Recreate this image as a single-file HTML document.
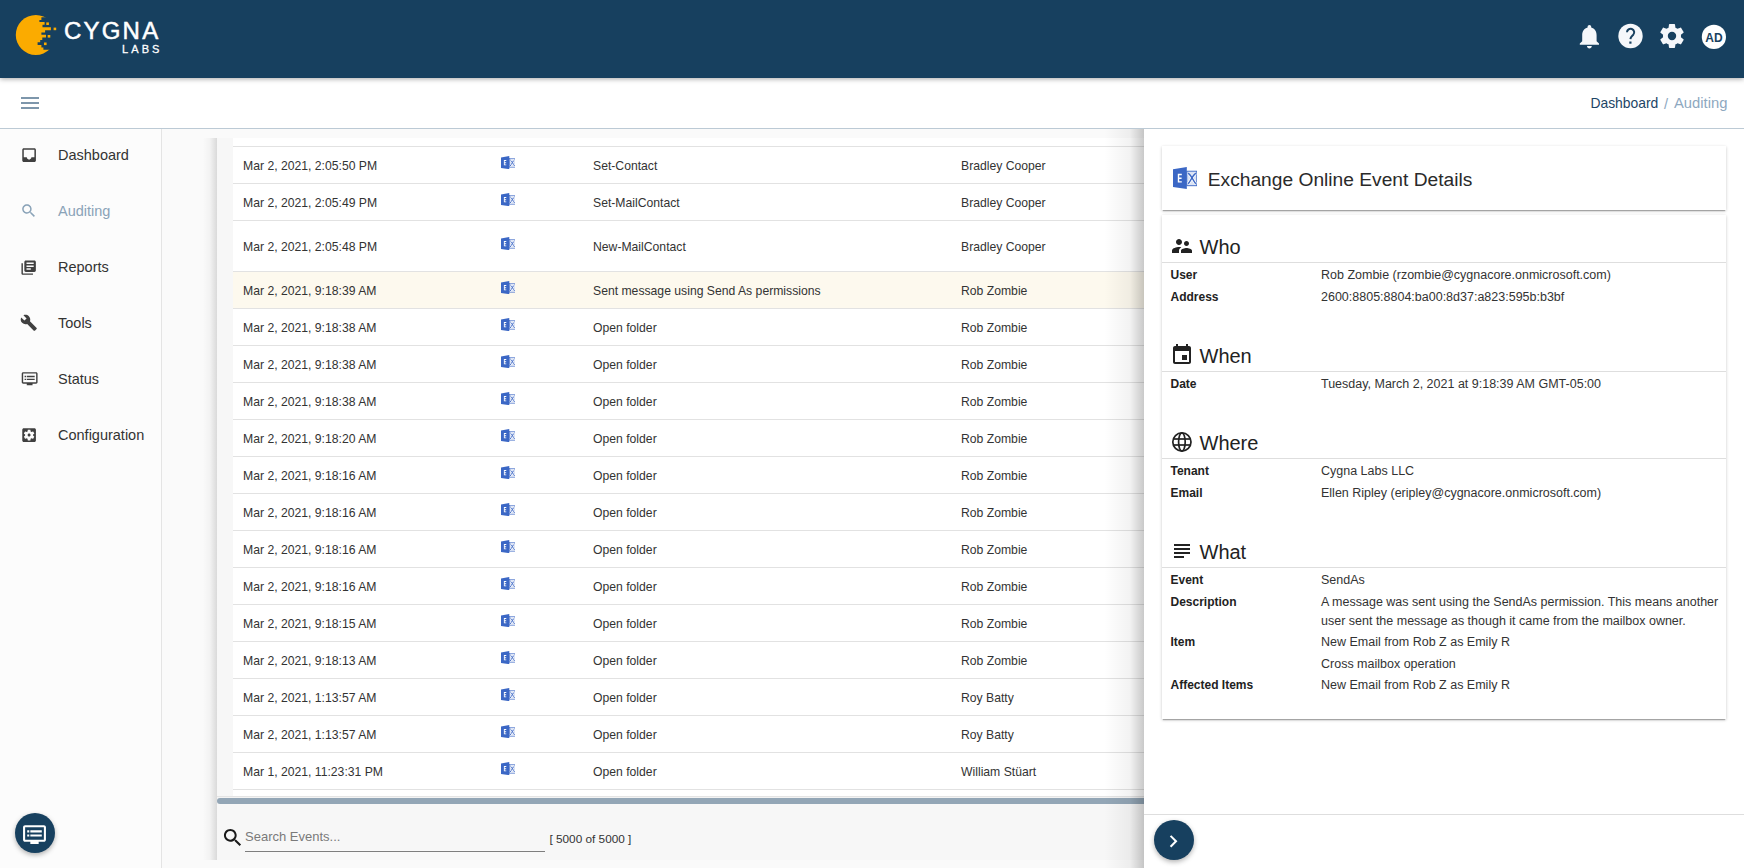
<!DOCTYPE html>
<html><head><meta charset="utf-8">
<style>
*{box-sizing:border-box;margin:0;padding:0}
html,body{width:1744px;height:868px;overflow:hidden;background:#fdfdfd;font-family:"Liberation Sans",sans-serif;color:#222;position:relative}
.abs{position:absolute}
.t{position:absolute;white-space:nowrap;line-height:1}
#hdr{position:absolute;left:0;top:0;width:1744px;height:78px;background:#17405f;box-shadow:0 1px 5px rgba(0,0,0,.35);z-index:5}
#bar{position:absolute;left:0;top:78px;width:1744px;height:51px;background:#fff;border-bottom:1px solid #bccad5}
#side{position:absolute;left:0;top:129px;width:162px;height:739px;background:#fcfcfc;border-right:1px solid #e4e4e4}
#main{position:absolute;left:162px;top:129px;width:982px;height:739px;background:#fafafa}
#cardsh{position:absolute;left:203px;top:138px;width:14px;height:722px;background:linear-gradient(to right,rgba(0,0,0,0),rgba(0,0,0,.03) 50%,rgba(0,0,0,.13))}
#card{position:absolute;left:217px;top:138px;width:927px;height:722px;background:#f7f7f7}
#tbl{position:absolute;left:233px;top:138px;width:911px;height:658px;background:#fff}
#scroll{position:absolute;left:217px;top:796px;width:927px;height:8px;background:#f3f3f3;border-top:1px solid #e4e4e4}
#thumb{position:absolute;left:217px;top:798px;width:1000px;height:6px;background:#93a6b6;border-radius:3px}
.row{position:absolute;left:233px;width:911px;border-bottom:1px solid #e2e2e2;font-size:12.2px;color:#333}
.row span{position:absolute;white-space:nowrap;line-height:14px}
.c1{left:10px}.c3{left:360px}.c4{left:728px}
#detsh{position:absolute;left:1104px;top:129px;width:40px;height:739px;background:linear-gradient(to right,rgba(0,0,0,0),rgba(0,0,0,.05) 65%,rgba(0,0,0,.21))}
#detail{position:absolute;left:1144px;top:129px;width:600px;height:739px;background:#fff}
.dcard{position:absolute;left:1162px;width:564px;background:#fff;box-shadow:0 1px 3px rgba(0,0,0,.22),0 2px 1px -1px rgba(0,0,0,.25)}
.nav{position:absolute;left:58px;font-size:14.5px;color:#333;white-space:nowrap;line-height:16px}
.sec{position:absolute;left:1199.5px;font-size:20px;color:#222;white-space:nowrap;line-height:20px}
.div{position:absolute;left:1162px;width:564px;height:1px;background:#dedede}
.lab{position:absolute;left:1170.5px;font-size:12px;font-weight:bold;color:#222;white-space:nowrap;line-height:14px}
.val{position:absolute;left:1321px;font-size:12.5px;color:#333;white-space:nowrap;line-height:14px}
.fab{position:absolute;width:40px;height:40px;border-radius:50%;background:#17405f;box-shadow:0 2px 5px rgba(0,0,0,.3)}
</style></head><body>


<div id="hdr">
<svg class="abs" style="left:0;top:0" width="200" height="78" viewBox="0 0 200 78">
<defs><clipPath id="lc"><polygon points="10,0 60,0 60,17.2 41.4,17.2 41.4,20 39.4,20 39.4,22.1 44.6,22.1 44.6,24.7 42.5,24.7 42.5,27.3 50.9,27.3 50.9,30.2 45.1,30.2 45.1,32.5 41.4,32.5 41.4,34.8 46,34.8 46,37.4 42.3,37.4 42.3,40 40.2,40 40.2,42.3 37.6,42.3 37.6,44.9 41.4,44.9 41.4,47.4 43.4,47.4 43.4,49.7 60,49.7 60,60 10,60"/></clipPath></defs>
<circle cx="35.8" cy="34.9" r="20" fill="#fbab00" clip-path="url(#lc)"/>
<rect x="46.3" y="22.4" width="2.6" height="2.6" fill="#fbab00"/>
<rect x="53.6" y="27.6" width="2.6" height="2.6" fill="#fbab00"/>
<rect x="47.7" y="35" width="2.6" height="2.6" fill="#fbab00"/>
<rect x="44" y="42.5" width="2.6" height="2.6" fill="#fbab00"/>
</svg>
<div class="t" style="left:64px;top:19.2px;font-size:24px;letter-spacing:2.2px;color:#fff;-webkit-text-stroke:0.5px #fff">CYGNA</div>
<div class="t" style="left:122px;top:44px;font-size:11px;letter-spacing:3.1px;color:#fff;-webkit-text-stroke:0.3px #fff">LABS</div>
<svg class="abs" style="left:1574.5px;top:21.6px" width="28.8" height="28.8" viewBox="0 0 24 24"><path fill="#f5f7fa" d="M12 22c1.1 0 2-.9 2-2h-4c0 1.1.89 2 2 2zm6-6v-5c0-3.07-1.64-5.64-4.5-6.32V4c0-.83-.67-1.5-1.5-1.5s-1.5.67-1.5 1.5v.68C7.63 5.36 6 7.92 6 11v5l-2 2v1h16v-1l-2-2z"/></svg>
<svg class="abs" style="left:1600px;top:0" width="144" height="78" viewBox="1600 0 144 78">
<circle cx="1630.5" cy="36" r="12.2" fill="#f5f7fa"/>
<path d="M1627 32.3a3.6 3.6 0 1 1 6.3 2.4c-1.3 1.4-2.7 2.3-2.9 4.4" fill="none" stroke="#194160" stroke-width="2"/>
<rect x="1629.3" y="41.5" width="2.2" height="2.2" fill="#194160"/>
<g transform="translate(1657.6 21.6) scale(1.2)"><path fill="#f5f7fa" d="M12,15.5A3.5,3.5 0 0,1 8.5,12A3.5,3.5 0 0,1 12,8.5A3.5,3.5 0 0,1 15.5,12A3.5,3.5 0 0,1 12,15.5M19.43,12.97C19.47,12.65 19.5,12.33 19.5,12C19.5,11.67 19.47,11.34 19.43,11L21.54,9.37C21.73,9.22 21.78,8.95 21.66,8.73L19.66,5.27C19.54,5.05 19.270,4.96 19.05,5.05L16.56,6.05C16.04,5.66 15.5,5.32 14.87,5.07L14.5,2.42C14.46,2.18 14.25,2 14,2H10C9.75,2 9.54,2.18 9.5,2.42L9.13,5.07C8.5,5.32 7.96,5.66 7.44,6.05L4.95,5.05C4.73,4.96 4.46,5.05 4.34,5.27L2.34,8.73C2.21,8.95 2.27,9.22 2.46,9.37L4.57,11C4.53,11.34 4.5,11.67 4.5,12C4.5,12.33 4.53,12.65 4.57,12.97L2.46,14.63C2.27,14.78 2.21,15.05 2.34,15.27L4.34,18.73C4.46,18.95 4.73,19.03 4.95,18.95L7.44,17.94C7.96,18.34 8.5,18.68 9.13,18.93L9.5,21.58C9.54,21.82 9.75,22 10,22H14C14.25,22 14.46,21.82 14.5,21.58L14.87,18.93C15.5,18.67 16.04,18.34 16.56,17.94L19.05,18.95C19.27,19.03 19.54,18.95 19.66,18.73L21.66,15.27C21.78,15.05 21.73,14.78 21.54,14.63L19.43,12.97Z"/></g>
<circle cx="1713.9" cy="36.9" r="12.1" fill="#fff"/>
</svg>
<div class="t" style="left:1705.3px;top:31.5px;font-size:12px;font-weight:bold;color:#194160">AD</div>
</div>

<div id="bar">
<div class="abs" style="left:21px;top:19px;width:18px;height:2px;background:#7d96ab"></div>
<div class="abs" style="left:21px;top:24px;width:18px;height:2px;background:#7d96ab"></div>
<div class="abs" style="left:21px;top:29px;width:18px;height:2px;background:#7d96ab"></div>
<div class="t" style="left:1590.4px;top:19.1px;font-size:13.9px;color:#1d4566">Dashboard</div><div class="t" style="left:1664px;top:18.5px;font-size:14.6px;color:#8ea8bf">/</div><div class="t" style="left:1674px;top:18.4px;font-size:14.8px;color:#8ea8bf">Auditing</div>
</div>

<div id="side">
<svg class="abs" style="left:20.0px;top:16.5px" width="18.2" height="18.2" viewBox="0 0 24 24"><path fill="#404040" d="M19 3H4.99c-1.11 0-1.98.89-1.98 2L3 19c0 1.1.88 2 1.99 2H19c1.1 0 2-.9 2-2V5c0-1.11-.9-2-2-2zm0 12h-4c0 1.66-1.35 3-3 3s-3-1.34-3-3H4.99V5H19v10z"/></svg>
<div class="nav" style="top:18.3px;color:#333">Dashboard</div>
<svg class="abs" style="left:20.1px;top:73.1px" width="17.5" height="17.5" viewBox="0 0 24 24"><path fill="#8aa3b8" d="M15.5 14h-.79l-.28-.27C15.41 12.590 16 11.11 16 9.5 16 5.91 13.09 3 9.5 3S3 5.91 3 9.5 5.91 16 9.5 16c1.61 0 3.09-.59 4.23-1.57l.27.28v.79l5 4.99L20.49 19l-4.99-5zm-6 0C7.01 14 5 11.99 5 9.5S7.01 5 9.5 5 14 7.01 14 9.5 11.99 14 9.5 14z"/></svg>
<div class="nav" style="top:74.3px;color:#8aa3b8">Auditing</div>
<svg class="abs" style="left:20.3px;top:129.5px" width="17.3" height="17.3" viewBox="0 0 24 24"><path fill="#404040" d="M4 6H2v14c0 1.1.9 2 2 2h14v-2H4V6zm16-4H8c-1.1 0-2 .9-2 2v12c0 1.1.9 2 2 2h12c1.1 0 2-.9 2-2V4c0-1.1-.9-2-2-2zm-1 9H9V9h10v2zm-4 4H9v-2h6v2zm4-8H9V5h10v2z"/></svg>
<div class="nav" style="top:130.3px;color:#333">Reports</div>
<svg class="abs" style="left:19.9px;top:184.9px" width="17.6" height="17.6" viewBox="0 0 24 24"><path fill="#404040" d="M22.7 19l-9.1-9.1c.9-2.3.4-5-1.5-6.9-2-2-5-2.4-7.4-1.3L9 6 6 9 1.6 4.7C.4 7.1.9 10.1 2.9 12.1c1.9 1.9 4.6 2.4 6.9 1.5l9.1 9.1c.4.4 1 .4 1.4 0l2.3-2.3c.5-.4.5-1.1.1-1.4z"/></svg>
<div class="nav" style="top:186.3px;color:#333">Tools</div>
<svg class="abs" style="left:20.5px;top:240.7px" width="17.3" height="17.3" viewBox="0 0 24 24"><path fill="#404040" d="M21 3H3c-1.1 0-2 .9-2 2v12c0 1.1.9 2 2 2h5v2h8v-2h5c1.1 0 1.99-.9 1.99-2L23 5c0-1.1-.9-2-2-2zm0 14H3V5h18v12zm-2-9H8v2h11V8zm0 4H8v2h11v-2zM7 8H5v2h2V8zm0 4H5v2h2v-2z"/></svg>
<div class="nav" style="top:242.3px;color:#333">Status</div>
<svg class="abs" style="left:20.0px;top:296.7px" width="18.2" height="18.2" viewBox="0 0 24 24"><path fill="#404040" d="M12 10c-1.1 0-2 .9-2 2s.9 2 2 2 2-.9 2-2-.9-2-2-2zm7-7H5c-1.11 0-2 .9-2 2v14c0 1.1.89 2 2 2h14c1.11 0 2-.9 2-2V5c0-1.1-.89-2-2-2zm-1.75 9c0 .23-.02.46-.05.68l1.48 1.16c.13.11.17.3.08.45l-1.4 2.42c-.09.15-.27.21-.43.15l-1.74-.7c-.36.28-.76.51-1.18.69l-.26 1.85c-.03.17-.18.3-.35.3h-2.8c-.17 0-.32-.13-.35-.29l-.26-1.85c-.43-.18-.82-.41-1.18-.69l-1.74.7c-.16.06-.34 0-.43-.15l-1.4-2.42c-.09-.15-.05-.34.08-.45l1.48-1.16c-.03-.23-.05-.46-.05-.69 0-.23.02-.46.05-.68l-1.48-1.160c-.13-.11-.17-.3-.08-.45l1.4-2.42c.09-.15.27-.21.43-.15l1.74.7c.36-.28.76-.51 1.18-.69l.26-1.85c.03-.17.18-.3.35-.3h2.8c.17 0 .32.13.35.29l.26 1.85c.43.18.82.41 1.18.69l1.74-.7c.16-.06.34 0 .43.15l1.4 2.42c.09.15.05.34-.08.45l-1.48 1.16c.03.23.05.46.05.69z"/></svg>
<div class="nav" style="top:298.3px;color:#333">Configuration</div>
</div>
<div class="fab" style="left:15px;top:813px"><svg class="abs" style="left:7.1px;top:8.9px" width="25" height="25" viewBox="0 0 24 24"><path fill="#fff" d="M21 3H3c-1.1 0-2 .9-2 2v12c0 1.1.9 2 2 2h5v2h8v-2h5c1.1 0 1.99-.9 1.99-2L23 5c0-1.1-.9-2-2-2zm0 14H3V5h18v12zm-2-9H8v2h11V8zm0 4H8v2h11v-2zM7 8H5v2h2V8zm0 4H5v2h2v-2z"/></svg></div>

<div id="main"></div>
<div id="cardsh"></div>
<div id="card"></div>
<div id="tbl"></div>
<div class="abs" style="left:233px;top:146px;width:911px;height:1px;background:#e2e2e2"></div>
<div class="row" style="top:147px;height:37px;"><span class="c1" style="top:11.5px">Mar 2, 2021, 2:05:50 PM</span><span class="c3" style="top:11.5px">Set-Contact</span><span class="c4" style="top:11.5px">Bradley Cooper</span><svg class="abs" style="left:268px;top:8.7px" width="14.40" height="13.20" viewBox="0 0 24 22"><rect x="13.8" y="4.2" width="10" height="14.5" fill="#dbe3f4" stroke="#3b67c5" stroke-width="0.9"/>
<path d="M15.2 6.2 C18.5 8.5 20 13.5 22.8 16.8 M22.8 6.2 C19.5 8.5 18 13.5 15.2 16.8" stroke="#fff" stroke-width="2.6" fill="none"/><path d="M15.2 6.2 C18.5 8.5 20 13.5 22.8 16.8 M22.8 6.2 C19.5 8.5 18 13.5 15.2 16.8" stroke="#3b67c5" stroke-width="1.5" fill="none"/>
<polygon points="0,2.3 13.8,0 13.8,22 0,19.9" fill="#3b67c5"/>
<path d="M4.8 6.8h4v1.4h-2.6v2.3h2.4v1.4h-2.4v2.3h2.6v1.4h-4z" fill="#fff"/></svg></div>
<div class="row" style="top:184px;height:37px;"><span class="c1" style="top:11.5px">Mar 2, 2021, 2:05:49 PM</span><span class="c3" style="top:11.5px">Set-MailContact</span><span class="c4" style="top:11.5px">Bradley Cooper</span><svg class="abs" style="left:268px;top:8.7px" width="14.40" height="13.20" viewBox="0 0 24 22"><rect x="13.8" y="4.2" width="10" height="14.5" fill="#dbe3f4" stroke="#3b67c5" stroke-width="0.9"/>
<path d="M15.2 6.2 C18.5 8.5 20 13.5 22.8 16.8 M22.8 6.2 C19.5 8.5 18 13.5 15.2 16.8" stroke="#fff" stroke-width="2.6" fill="none"/><path d="M15.2 6.2 C18.5 8.5 20 13.5 22.8 16.8 M22.8 6.2 C19.5 8.5 18 13.5 15.2 16.8" stroke="#3b67c5" stroke-width="1.5" fill="none"/>
<polygon points="0,2.3 13.8,0 13.8,22 0,19.9" fill="#3b67c5"/>
<path d="M4.8 6.8h4v1.4h-2.6v2.3h2.4v1.4h-2.4v2.3h2.6v1.4h-4z" fill="#fff"/></svg></div>
<div class="row" style="top:221px;height:51px;"><span class="c1" style="top:18.5px">Mar 2, 2021, 2:05:48 PM</span><span class="c3" style="top:18.5px">New-MailContact</span><span class="c4" style="top:18.5px">Bradley Cooper</span><svg class="abs" style="left:268px;top:15.7px" width="14.40" height="13.20" viewBox="0 0 24 22"><rect x="13.8" y="4.2" width="10" height="14.5" fill="#dbe3f4" stroke="#3b67c5" stroke-width="0.9"/>
<path d="M15.2 6.2 C18.5 8.5 20 13.5 22.8 16.8 M22.8 6.2 C19.5 8.5 18 13.5 15.2 16.8" stroke="#fff" stroke-width="2.6" fill="none"/><path d="M15.2 6.2 C18.5 8.5 20 13.5 22.8 16.8 M22.8 6.2 C19.5 8.5 18 13.5 15.2 16.8" stroke="#3b67c5" stroke-width="1.5" fill="none"/>
<polygon points="0,2.3 13.8,0 13.8,22 0,19.9" fill="#3b67c5"/>
<path d="M4.8 6.8h4v1.4h-2.6v2.3h2.4v1.4h-2.4v2.3h2.6v1.4h-4z" fill="#fff"/></svg></div>
<div class="row" style="top:272px;height:37px;background:#fdf9ee;"><span class="c1" style="top:11.5px">Mar 2, 2021, 9:18:39 AM</span><span class="c3" style="top:11.5px">Sent message using Send As permissions</span><span class="c4" style="top:11.5px">Rob Zombie</span><svg class="abs" style="left:268px;top:8.7px" width="14.40" height="13.20" viewBox="0 0 24 22"><rect x="13.8" y="4.2" width="10" height="14.5" fill="#dbe3f4" stroke="#3b67c5" stroke-width="0.9"/>
<path d="M15.2 6.2 C18.5 8.5 20 13.5 22.8 16.8 M22.8 6.2 C19.5 8.5 18 13.5 15.2 16.8" stroke="#fff" stroke-width="2.6" fill="none"/><path d="M15.2 6.2 C18.5 8.5 20 13.5 22.8 16.8 M22.8 6.2 C19.5 8.5 18 13.5 15.2 16.8" stroke="#3b67c5" stroke-width="1.5" fill="none"/>
<polygon points="0,2.3 13.8,0 13.8,22 0,19.9" fill="#3b67c5"/>
<path d="M4.8 6.8h4v1.4h-2.6v2.3h2.4v1.4h-2.4v2.3h2.6v1.4h-4z" fill="#fff"/></svg></div>
<div class="row" style="top:309px;height:37px;"><span class="c1" style="top:11.5px">Mar 2, 2021, 9:18:38 AM</span><span class="c3" style="top:11.5px">Open folder</span><span class="c4" style="top:11.5px">Rob Zombie</span><svg class="abs" style="left:268px;top:8.7px" width="14.40" height="13.20" viewBox="0 0 24 22"><rect x="13.8" y="4.2" width="10" height="14.5" fill="#dbe3f4" stroke="#3b67c5" stroke-width="0.9"/>
<path d="M15.2 6.2 C18.5 8.5 20 13.5 22.8 16.8 M22.8 6.2 C19.5 8.5 18 13.5 15.2 16.8" stroke="#fff" stroke-width="2.6" fill="none"/><path d="M15.2 6.2 C18.5 8.5 20 13.5 22.8 16.8 M22.8 6.2 C19.5 8.5 18 13.5 15.2 16.8" stroke="#3b67c5" stroke-width="1.5" fill="none"/>
<polygon points="0,2.3 13.8,0 13.8,22 0,19.9" fill="#3b67c5"/>
<path d="M4.8 6.8h4v1.4h-2.6v2.3h2.4v1.4h-2.4v2.3h2.6v1.4h-4z" fill="#fff"/></svg></div>
<div class="row" style="top:346px;height:37px;"><span class="c1" style="top:11.5px">Mar 2, 2021, 9:18:38 AM</span><span class="c3" style="top:11.5px">Open folder</span><span class="c4" style="top:11.5px">Rob Zombie</span><svg class="abs" style="left:268px;top:8.7px" width="14.40" height="13.20" viewBox="0 0 24 22"><rect x="13.8" y="4.2" width="10" height="14.5" fill="#dbe3f4" stroke="#3b67c5" stroke-width="0.9"/>
<path d="M15.2 6.2 C18.5 8.5 20 13.5 22.8 16.8 M22.8 6.2 C19.5 8.5 18 13.5 15.2 16.8" stroke="#fff" stroke-width="2.6" fill="none"/><path d="M15.2 6.2 C18.5 8.5 20 13.5 22.8 16.8 M22.8 6.2 C19.5 8.5 18 13.5 15.2 16.8" stroke="#3b67c5" stroke-width="1.5" fill="none"/>
<polygon points="0,2.3 13.8,0 13.8,22 0,19.9" fill="#3b67c5"/>
<path d="M4.8 6.8h4v1.4h-2.6v2.3h2.4v1.4h-2.4v2.3h2.6v1.4h-4z" fill="#fff"/></svg></div>
<div class="row" style="top:383px;height:37px;"><span class="c1" style="top:11.5px">Mar 2, 2021, 9:18:38 AM</span><span class="c3" style="top:11.5px">Open folder</span><span class="c4" style="top:11.5px">Rob Zombie</span><svg class="abs" style="left:268px;top:8.7px" width="14.40" height="13.20" viewBox="0 0 24 22"><rect x="13.8" y="4.2" width="10" height="14.5" fill="#dbe3f4" stroke="#3b67c5" stroke-width="0.9"/>
<path d="M15.2 6.2 C18.5 8.5 20 13.5 22.8 16.8 M22.8 6.2 C19.5 8.5 18 13.5 15.2 16.8" stroke="#fff" stroke-width="2.6" fill="none"/><path d="M15.2 6.2 C18.5 8.5 20 13.5 22.8 16.8 M22.8 6.2 C19.5 8.5 18 13.5 15.2 16.8" stroke="#3b67c5" stroke-width="1.5" fill="none"/>
<polygon points="0,2.3 13.8,0 13.8,22 0,19.9" fill="#3b67c5"/>
<path d="M4.8 6.8h4v1.4h-2.6v2.3h2.4v1.4h-2.4v2.3h2.6v1.4h-4z" fill="#fff"/></svg></div>
<div class="row" style="top:420px;height:37px;"><span class="c1" style="top:11.5px">Mar 2, 2021, 9:18:20 AM</span><span class="c3" style="top:11.5px">Open folder</span><span class="c4" style="top:11.5px">Rob Zombie</span><svg class="abs" style="left:268px;top:8.7px" width="14.40" height="13.20" viewBox="0 0 24 22"><rect x="13.8" y="4.2" width="10" height="14.5" fill="#dbe3f4" stroke="#3b67c5" stroke-width="0.9"/>
<path d="M15.2 6.2 C18.5 8.5 20 13.5 22.8 16.8 M22.8 6.2 C19.5 8.5 18 13.5 15.2 16.8" stroke="#fff" stroke-width="2.6" fill="none"/><path d="M15.2 6.2 C18.5 8.5 20 13.5 22.8 16.8 M22.8 6.2 C19.5 8.5 18 13.5 15.2 16.8" stroke="#3b67c5" stroke-width="1.5" fill="none"/>
<polygon points="0,2.3 13.8,0 13.8,22 0,19.9" fill="#3b67c5"/>
<path d="M4.8 6.8h4v1.4h-2.6v2.3h2.4v1.4h-2.4v2.3h2.6v1.4h-4z" fill="#fff"/></svg></div>
<div class="row" style="top:457px;height:37px;"><span class="c1" style="top:11.5px">Mar 2, 2021, 9:18:16 AM</span><span class="c3" style="top:11.5px">Open folder</span><span class="c4" style="top:11.5px">Rob Zombie</span><svg class="abs" style="left:268px;top:8.7px" width="14.40" height="13.20" viewBox="0 0 24 22"><rect x="13.8" y="4.2" width="10" height="14.5" fill="#dbe3f4" stroke="#3b67c5" stroke-width="0.9"/>
<path d="M15.2 6.2 C18.5 8.5 20 13.5 22.8 16.8 M22.8 6.2 C19.5 8.5 18 13.5 15.2 16.8" stroke="#fff" stroke-width="2.6" fill="none"/><path d="M15.2 6.2 C18.5 8.5 20 13.5 22.8 16.8 M22.8 6.2 C19.5 8.5 18 13.5 15.2 16.8" stroke="#3b67c5" stroke-width="1.5" fill="none"/>
<polygon points="0,2.3 13.8,0 13.8,22 0,19.9" fill="#3b67c5"/>
<path d="M4.8 6.8h4v1.4h-2.6v2.3h2.4v1.4h-2.4v2.3h2.6v1.4h-4z" fill="#fff"/></svg></div>
<div class="row" style="top:494px;height:37px;"><span class="c1" style="top:11.5px">Mar 2, 2021, 9:18:16 AM</span><span class="c3" style="top:11.5px">Open folder</span><span class="c4" style="top:11.5px">Rob Zombie</span><svg class="abs" style="left:268px;top:8.7px" width="14.40" height="13.20" viewBox="0 0 24 22"><rect x="13.8" y="4.2" width="10" height="14.5" fill="#dbe3f4" stroke="#3b67c5" stroke-width="0.9"/>
<path d="M15.2 6.2 C18.5 8.5 20 13.5 22.8 16.8 M22.8 6.2 C19.5 8.5 18 13.5 15.2 16.8" stroke="#fff" stroke-width="2.6" fill="none"/><path d="M15.2 6.2 C18.5 8.5 20 13.5 22.8 16.8 M22.8 6.2 C19.5 8.5 18 13.5 15.2 16.8" stroke="#3b67c5" stroke-width="1.5" fill="none"/>
<polygon points="0,2.3 13.8,0 13.8,22 0,19.9" fill="#3b67c5"/>
<path d="M4.8 6.8h4v1.4h-2.6v2.3h2.4v1.4h-2.4v2.3h2.6v1.4h-4z" fill="#fff"/></svg></div>
<div class="row" style="top:531px;height:37px;"><span class="c1" style="top:11.5px">Mar 2, 2021, 9:18:16 AM</span><span class="c3" style="top:11.5px">Open folder</span><span class="c4" style="top:11.5px">Rob Zombie</span><svg class="abs" style="left:268px;top:8.7px" width="14.40" height="13.20" viewBox="0 0 24 22"><rect x="13.8" y="4.2" width="10" height="14.5" fill="#dbe3f4" stroke="#3b67c5" stroke-width="0.9"/>
<path d="M15.2 6.2 C18.5 8.5 20 13.5 22.8 16.8 M22.8 6.2 C19.5 8.5 18 13.5 15.2 16.8" stroke="#fff" stroke-width="2.6" fill="none"/><path d="M15.2 6.2 C18.5 8.5 20 13.5 22.8 16.8 M22.8 6.2 C19.5 8.5 18 13.5 15.2 16.8" stroke="#3b67c5" stroke-width="1.5" fill="none"/>
<polygon points="0,2.3 13.8,0 13.8,22 0,19.9" fill="#3b67c5"/>
<path d="M4.8 6.8h4v1.4h-2.6v2.3h2.4v1.4h-2.4v2.3h2.6v1.4h-4z" fill="#fff"/></svg></div>
<div class="row" style="top:568px;height:37px;"><span class="c1" style="top:11.5px">Mar 2, 2021, 9:18:16 AM</span><span class="c3" style="top:11.5px">Open folder</span><span class="c4" style="top:11.5px">Rob Zombie</span><svg class="abs" style="left:268px;top:8.7px" width="14.40" height="13.20" viewBox="0 0 24 22"><rect x="13.8" y="4.2" width="10" height="14.5" fill="#dbe3f4" stroke="#3b67c5" stroke-width="0.9"/>
<path d="M15.2 6.2 C18.5 8.5 20 13.5 22.8 16.8 M22.8 6.2 C19.5 8.5 18 13.5 15.2 16.8" stroke="#fff" stroke-width="2.6" fill="none"/><path d="M15.2 6.2 C18.5 8.5 20 13.5 22.8 16.8 M22.8 6.2 C19.5 8.5 18 13.5 15.2 16.8" stroke="#3b67c5" stroke-width="1.5" fill="none"/>
<polygon points="0,2.3 13.8,0 13.8,22 0,19.9" fill="#3b67c5"/>
<path d="M4.8 6.8h4v1.4h-2.6v2.3h2.4v1.4h-2.4v2.3h2.6v1.4h-4z" fill="#fff"/></svg></div>
<div class="row" style="top:605px;height:37px;"><span class="c1" style="top:11.5px">Mar 2, 2021, 9:18:15 AM</span><span class="c3" style="top:11.5px">Open folder</span><span class="c4" style="top:11.5px">Rob Zombie</span><svg class="abs" style="left:268px;top:8.7px" width="14.40" height="13.20" viewBox="0 0 24 22"><rect x="13.8" y="4.2" width="10" height="14.5" fill="#dbe3f4" stroke="#3b67c5" stroke-width="0.9"/>
<path d="M15.2 6.2 C18.5 8.5 20 13.5 22.8 16.8 M22.8 6.2 C19.5 8.5 18 13.5 15.2 16.8" stroke="#fff" stroke-width="2.6" fill="none"/><path d="M15.2 6.2 C18.5 8.5 20 13.5 22.8 16.8 M22.8 6.2 C19.5 8.5 18 13.5 15.2 16.8" stroke="#3b67c5" stroke-width="1.5" fill="none"/>
<polygon points="0,2.3 13.8,0 13.8,22 0,19.9" fill="#3b67c5"/>
<path d="M4.8 6.8h4v1.4h-2.6v2.3h2.4v1.4h-2.4v2.3h2.6v1.4h-4z" fill="#fff"/></svg></div>
<div class="row" style="top:642px;height:37px;"><span class="c1" style="top:11.5px">Mar 2, 2021, 9:18:13 AM</span><span class="c3" style="top:11.5px">Open folder</span><span class="c4" style="top:11.5px">Rob Zombie</span><svg class="abs" style="left:268px;top:8.7px" width="14.40" height="13.20" viewBox="0 0 24 22"><rect x="13.8" y="4.2" width="10" height="14.5" fill="#dbe3f4" stroke="#3b67c5" stroke-width="0.9"/>
<path d="M15.2 6.2 C18.5 8.5 20 13.5 22.8 16.8 M22.8 6.2 C19.5 8.5 18 13.5 15.2 16.8" stroke="#fff" stroke-width="2.6" fill="none"/><path d="M15.2 6.2 C18.5 8.5 20 13.5 22.8 16.8 M22.8 6.2 C19.5 8.5 18 13.5 15.2 16.8" stroke="#3b67c5" stroke-width="1.5" fill="none"/>
<polygon points="0,2.3 13.8,0 13.8,22 0,19.9" fill="#3b67c5"/>
<path d="M4.8 6.8h4v1.4h-2.6v2.3h2.4v1.4h-2.4v2.3h2.6v1.4h-4z" fill="#fff"/></svg></div>
<div class="row" style="top:679px;height:37px;"><span class="c1" style="top:11.5px">Mar 2, 2021, 1:13:57 AM</span><span class="c3" style="top:11.5px">Open folder</span><span class="c4" style="top:11.5px">Roy Batty</span><svg class="abs" style="left:268px;top:8.7px" width="14.40" height="13.20" viewBox="0 0 24 22"><rect x="13.8" y="4.2" width="10" height="14.5" fill="#dbe3f4" stroke="#3b67c5" stroke-width="0.9"/>
<path d="M15.2 6.2 C18.5 8.5 20 13.5 22.8 16.8 M22.8 6.2 C19.5 8.5 18 13.5 15.2 16.8" stroke="#fff" stroke-width="2.6" fill="none"/><path d="M15.2 6.2 C18.5 8.5 20 13.5 22.8 16.8 M22.8 6.2 C19.5 8.5 18 13.5 15.2 16.8" stroke="#3b67c5" stroke-width="1.5" fill="none"/>
<polygon points="0,2.3 13.8,0 13.8,22 0,19.9" fill="#3b67c5"/>
<path d="M4.8 6.8h4v1.4h-2.6v2.3h2.4v1.4h-2.4v2.3h2.6v1.4h-4z" fill="#fff"/></svg></div>
<div class="row" style="top:716px;height:37px;"><span class="c1" style="top:11.5px">Mar 2, 2021, 1:13:57 AM</span><span class="c3" style="top:11.5px">Open folder</span><span class="c4" style="top:11.5px">Roy Batty</span><svg class="abs" style="left:268px;top:8.7px" width="14.40" height="13.20" viewBox="0 0 24 22"><rect x="13.8" y="4.2" width="10" height="14.5" fill="#dbe3f4" stroke="#3b67c5" stroke-width="0.9"/>
<path d="M15.2 6.2 C18.5 8.5 20 13.5 22.8 16.8 M22.8 6.2 C19.5 8.5 18 13.5 15.2 16.8" stroke="#fff" stroke-width="2.6" fill="none"/><path d="M15.2 6.2 C18.5 8.5 20 13.5 22.8 16.8 M22.8 6.2 C19.5 8.5 18 13.5 15.2 16.8" stroke="#3b67c5" stroke-width="1.5" fill="none"/>
<polygon points="0,2.3 13.8,0 13.8,22 0,19.9" fill="#3b67c5"/>
<path d="M4.8 6.8h4v1.4h-2.6v2.3h2.4v1.4h-2.4v2.3h2.6v1.4h-4z" fill="#fff"/></svg></div>
<div class="row" style="top:753px;height:37px;"><span class="c1" style="top:11.5px">Mar 1, 2021, 11:23:31 PM</span><span class="c3" style="top:11.5px">Open folder</span><span class="c4" style="top:11.5px">William Stüart</span><svg class="abs" style="left:268px;top:8.7px" width="14.40" height="13.20" viewBox="0 0 24 22"><rect x="13.8" y="4.2" width="10" height="14.5" fill="#dbe3f4" stroke="#3b67c5" stroke-width="0.9"/>
<path d="M15.2 6.2 C18.5 8.5 20 13.5 22.8 16.8 M22.8 6.2 C19.5 8.5 18 13.5 15.2 16.8" stroke="#fff" stroke-width="2.6" fill="none"/><path d="M15.2 6.2 C18.5 8.5 20 13.5 22.8 16.8 M22.8 6.2 C19.5 8.5 18 13.5 15.2 16.8" stroke="#3b67c5" stroke-width="1.5" fill="none"/>
<polygon points="0,2.3 13.8,0 13.8,22 0,19.9" fill="#3b67c5"/>
<path d="M4.8 6.8h4v1.4h-2.6v2.3h2.4v1.4h-2.4v2.3h2.6v1.4h-4z" fill="#fff"/></svg></div>
<div id="scroll"></div>
<div id="thumb"></div>
<svg class="abs" style="left:220.7px;top:826px" width="23.5" height="23.5" viewBox="0 0 24 24"><path fill="#1a1a1a" d="M15.5 14h-.79l-.28-.27C15.41 12.59 16 11.11 16 9.5 16 5.910 13.09 3 9.5 3S3 5.91 3 9.5 5.91 16 9.5 16c1.61 0 3.09-.59 4.23-1.57l.27.28v.79l5 4.99L20.49 19l-4.99-5zm-6 0C7.01 14 5 11.99 5 9.5S7.01 5 9.5 5 14 7.01 14 9.5 11.99 14 9.5 14z"/></svg>
<div class="t" style="left:245px;top:829.5px;font-size:13px;color:#7a7a7a">Search Events...</div>
<div class="abs" style="left:245px;top:851px;width:300px;height:1px;background:#7d7d7d"></div>
<div class="t" style="left:549.4px;top:834px;font-size:11.8px;color:#333">[ 5000 of 5000 ]</div>

<div id="detsh"></div>
<div id="detail"></div>
<div class="dcard" style="top:146px;height:64px"></div>
<div class="dcard" style="top:215px;height:504px"></div>
<svg class="abs" style="left:1173px;top:166.8px" width="24" height="22" viewBox="0 0 24 22"><rect x="13.8" y="4.2" width="10" height="14.5" fill="#dbe3f4" stroke="#3b67c5" stroke-width="0.9"/>
<path d="M15.2 6.2 C18.5 8.5 20 13.5 22.8 16.8 M22.8 6.2 C19.5 8.5 18 13.5 15.2 16.8" stroke="#fff" stroke-width="2.6" fill="none"/><path d="M15.2 6.2 C18.5 8.5 20 13.5 22.8 16.8 M22.8 6.2 C19.5 8.5 18 13.5 15.2 16.8" stroke="#3b67c5" stroke-width="1.5" fill="none"/>
<polygon points="0,2.3 13.8,0 13.8,22 0,19.9" fill="#3b67c5"/>
<path d="M4.8 6.8h4v1.4h-2.6v2.3h2.4v1.4h-2.4v2.3h2.6v1.4h-4z" fill="#fff"/></svg>
<div class="t" style="left:1207.8px;top:170.2px;font-size:19.2px;color:#2a2a2a;line-height:19.2px">Exchange Online Event Details</div>
<svg class="abs" style="left:1169.9px;top:233.9px" width="24" height="24" viewBox="0 0 24 24"><path fill="#222" d="M16.5 12c1.38 0 2.49-1.12 2.49-2.5S17.88 7 16.5 7C15.12 7 14 8.12 14 9.5s1.12 2.5 2.5 2.5zM9 11c1.66 0 2.99-1.34 2.99-3S10.66 5 9 5C7.34 5 6 6.34 6 8s1.34 3 3 3zm7.5 3c-1.83 0-5.5.92-5.5 2.75V19h11v-2.25c0-1.83-3.67-2.75-5.5-2.75zM9 13c-2.33 0-7 1.17-7 3.5V19h7v-2.25c0-.85.33-2.34 2.37-3.47C10.5 13.1 9.66 13 9 13z"/></svg>
<div class="sec" style="top:236.9px">Who</div>
<div class="div" style="top:262px"></div>
<svg class="abs" style="left:1170px;top:342.9px" width="24" height="24" viewBox="0 0 24 24"><path fill="#222" d="M17 12h-5v5h5v-5zM16 1v2H8V1H6v2H5c-1.11 0-1.99.9-1.99 2L3 19c0 1.1.89 2 2 2h14c1.1 0 2-.9 2-2V5c0-1.1-.9-2-2-2h-1V1h-2zm3 18H5V8h14v11z"/></svg>
<div class="sec" style="top:346.2px">When</div>
<div class="div" style="top:371px"></div>
<svg class="abs" style="left:1162px;top:421.8px" width="40" height="40" viewBox="1162 421.8 40 40"><g fill="none" stroke="#222" stroke-width="1.7"><circle cx="1181.9" cy="441.8" r="9.1"/><ellipse cx="1181.9" cy="441.8" rx="3.3" ry="9.1"/><line x1="1173" y1="438.8" x2="1190.8" y2="438.8"/><line x1="1173" y1="444.8" x2="1190.8" y2="444.8"/></g></svg>
<div class="sec" style="top:432.9px">Where</div>
<div class="div" style="top:458px"></div>
<svg class="abs" style="left:1169.9px;top:538.9px" width="24" height="24" viewBox="0 0 24 24"><path fill="#222" d="M14 17H4v2h10v-2zm6-8H4v2h16V9zM4 15h16v-2H4v2zM4 5v2h16V5H4z"/></svg>
<div class="sec" style="top:541.9px">What</div>
<div class="div" style="top:567px"></div>
<div class="lab" style="top:268.4px">User</div>
<div class="val" style="top:268.4px">Rob Zombie (rzombie@cygnacore.onmicrosoft.com)</div>
<div class="lab" style="top:289.6px">Address</div>
<div class="val" style="top:289.6px">2600:8805:8804:ba00:8d37:a823:595b:b3bf</div>
<div class="lab" style="top:376.5px">Date</div>
<div class="val" style="top:376.5px">Tuesday, March 2, 2021 at 9:18:39 AM GMT-05:00</div>
<div class="lab" style="top:463.6px">Tenant</div>
<div class="val" style="top:463.6px">Cygna Labs LLC</div>
<div class="lab" style="top:485.7px">Email</div>
<div class="val" style="top:485.7px">Ellen Ripley (eripley@cygnacore.onmicrosoft.com)</div>
<div class="lab" style="top:572.7px">Event</div>
<div class="val" style="top:572.7px">SendAs</div>
<div class="lab" style="top:594.8px">Description</div>
<div class="val" style="top:594.8px">A message was sent using the SendAs permission. This means another</div>
<div class="val" style="top:613.5px">user sent the message as though it came from the mailbox owner.</div>
<div class="lab" style="top:634.7px">Item</div>
<div class="val" style="top:634.7px">New Email from Rob Z as Emily R</div>
<div class="val" style="top:656.5px">Cross mailbox operation</div>
<div class="lab" style="top:677.6px">Affected Items</div>
<div class="val" style="top:677.6px">New Email from Rob Z as Emily R</div>
<div class="abs" style="left:1144px;top:814px;width:600px;height:1px;background:#dedede"></div>
<div class="fab" style="left:1154px;top:820px"><svg class="abs" style="left:7.2px;top:8.5px" width="24.7" height="24.7" viewBox="0 0 24 24"><path fill="#fff" d="M10 6L8.59 7.41 13.17 12l-4.58 4.59L10 18l6-6z"/></svg></div>
</body></html>
